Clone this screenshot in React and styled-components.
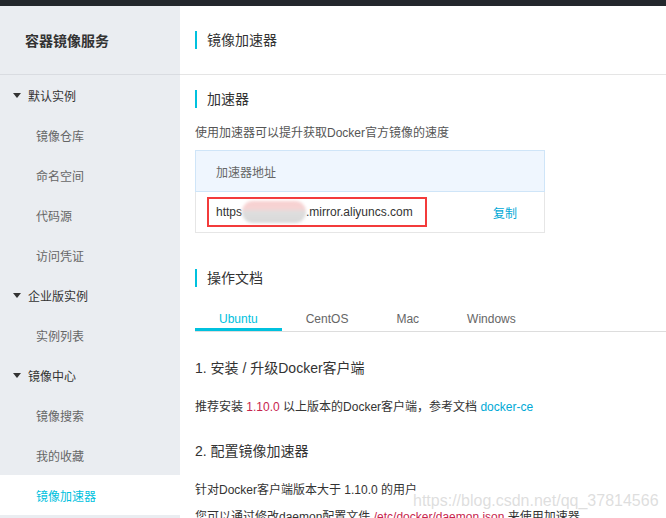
import styled, { createGlobalStyle } from "styled-components";

const Global = createGlobalStyle`
html, body {
  margin: 0;
  padding: 0;
  height: 100%;
  overflow: hidden;
  background: #fff;
}
body {
  font-family: "Liberation Sans", "Noto Sans CJK SC", sans-serif;
  color: #333;
}
`

const menu = [
  { title: "默认实例", items: ["镜像仓库", "命名空间", "代码源", "访问凭证"] },
  { title: "企业版实例", items: ["实例列表"] },
  { title: "镜像中心", items: ["镜像搜索", "我的收藏", "镜像加速器"] },
];

function App() {
  return (
    <Page>
      <Global />
      <TopBar />
      <Body>
        <Sidebar>
          <SideHead>容器镜像服务</SideHead>
          {menu.map((g) => (
            <div key={g.title}>
              <Group>
                <Caret />
                {g.title}
              </Group>
              {g.items.map((it) => (
                <Item key={it} $active={it === "镜像加速器"}>{it}</Item>
              ))}
            </div>
          ))}
          <Item />
        </Sidebar>
        <Main>
          <MainHead>
            <Title>镜像加速器</Title>
          </MainHead>
          <Content>
            <Title>加速器</Title>
            <Desc>使用加速器可以提升获取Docker官方镜像的速度</Desc>
            <Box>
              <BoxHead>加速器地址</BoxHead>
              <BoxRow>
                <Marked>
                  https<Blur />.mirror.aliyuncs.com
                </Marked>
                <Link>复制</Link>
              </BoxRow>
            </Box>
            <Title $top={36}>操作文档</Title>
            <Tabs>
              <Tab $active>Ubuntu</Tab>
              <Tab>CentOS</Tab>
              <Tab>Mac</Tab>
              <Tab>Windows</Tab>
            </Tabs>
            <Step $top={26}>1. 安装 / 升级Docker客户端</Step>
            <Text $top={20}>
              推荐安装 <Code>1.10.0</Code> 以上版本的Docker客户端，参考文档 <Link>docker-ce</Link>
            </Text>
            <Step $top={25}>2. 配置镜像加速器</Step>
            <Text $top={20}>针对Docker客户端版本大于 1.10.0 的用户</Text>
            <Text $top={9}>
              您可以通过修改daemon配置文件 <Code>/etc/docker/daemon.json</Code> 来使用加速器
            </Text>
          </Content>
          <Watermark>https://blog.csdn.net/qq_37814566</Watermark>
        </Main>
      </Body>
    </Page>
  );
}

export default App;

const Page = styled.div`
display: flex;
flex-direction: column;
height: 100vh;
`
const TopBar = styled.div`
height: 6px;
background: #23272c;
flex-shrink: 0;
`
const Body = styled.div`
flex: 1;
display: flex;
min-height: 0;
`
const Sidebar = styled.div`
width: 180px;
flex-shrink: 0;
background: #eaedf1;
font-size: 12px;
`
const SideHead = styled.div`
height: 68px;
border-bottom: 1px solid #d9dce1;
display: flex;
align-items: center;
padding-left: 25px;
font-size: 14px;
font-weight: bold;
color: #333;
`
const Group = styled.div`
height: 40px;
display: flex;
align-items: center;
padding-left: 13px;
color: #333;
`
const Caret = styled.span`
width: 0;
height: 0;
border-left: 4px solid transparent;
border-right: 4px solid transparent;
border-top: 5px solid #333;
margin-right: 7px;
`
const Item = styled.div`
height: 40px;
display: flex;
align-items: center;
padding-left: 36px;
color: ${(p) => (p.$active ? "#00c1de" : "#666")};
background: ${(p) => (p.$active ? "#fff" : "transparent")};
`
const Main = styled.div`
flex: 1;
position: relative;
overflow: hidden;
`
const MainHead = styled.div`
height: 68px;
border-bottom: 1px solid #e5e5e5;
display: flex;
align-items: center;
padding-left: 15px;
`
const Content = styled.div`
padding: 15px 0 0 15px;
`
const Title = styled.div`
margin-top: ${(p) => p.$top || 0}px;
border-left: 2px solid #00c1de;
padding-left: 10px;
font-size: 14px;
line-height: 18px;
color: #333;
`
const Desc = styled.div`
margin-top: 16px;
font-size: 12px;
line-height: 18px;
color: #555;
`
const Box = styled.div`
margin-top: 8px;
width: 350px;
font-size: 12px;
`
const BoxHead = styled.div`
height: 40px;
display: flex;
align-items: center;
padding-left: 20px;
background: #eff6fe;
border: 1px solid #cfe5f8;
color: #666;
`
const BoxRow = styled.div`
height: 40px;
display: flex;
align-items: center;
justify-content: space-between;
padding: 0 27px 0 11px;
border: 1px solid #e6e6e6;
border-top: none;
`
const Marked = styled.div`
box-sizing: border-box;
width: 220px;
height: 30px;
border: 2px solid #f33b3b;
display: flex;
align-items: center;
padding-left: 7px;
font-size: 12px;
color: #333;
`
const Blur = styled.span`
display: inline-block;
width: 64px;
height: 22px;
border-radius: 11px;
background: linear-gradient(#f8cfcf 0%, #f5d4d4 35%, #dedede 50%, #d8d8d8 100%);
filter: blur(1.5px);
`
const Link = styled.span`
color: #00a9d6;
font-size: 12px;
`
const Tabs = styled.div`
margin-top: 18px;
display: flex;
border-bottom: 1px solid #ddd;
height: 26px;
`
const Tab = styled.div`
padding: 5px 24px 0;
height: 18px;
line-height: 18px;
font-size: 12px;
color: ${(p) => (p.$active ? "#00c1de" : "#666")};
border-bottom: 3px solid ${(p) => (p.$active ? "#00c1de" : "transparent")};
`
const Step = styled.div`
margin-top: ${(p) => p.$top}px;
font-size: 14px;
line-height: 20px;
color: #333;
`
const Text = styled.div`
margin-top: ${(p) => p.$top}px;
font-size: 12px;
line-height: 18px;
color: #333;
`
const Code = styled.span`
color: #c7254e;
`
const Watermark = styled.div`
position: absolute;
left: 233px;
top: 486px;
font-size: 16px;
color: rgba(200, 200, 200, 0.6);
pointer-events: none;
`
